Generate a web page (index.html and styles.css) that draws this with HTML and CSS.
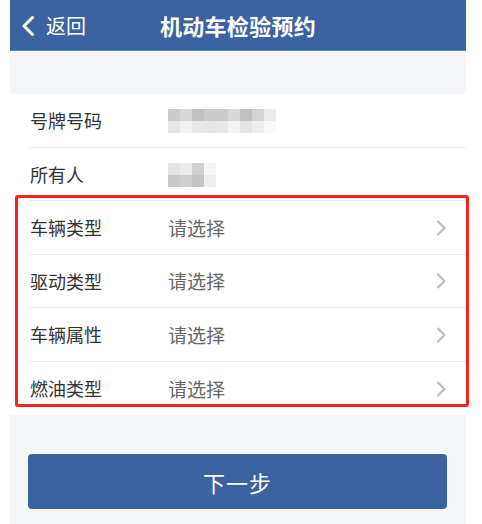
FILE: index.html
```html
<!DOCTYPE html>
<html lang="zh-CN">
<head>
<meta charset="utf-8">
<title>机动车检验预约</title>
<link rel="stylesheet" href="styles.css">
</head>
<body>
<div class="page">
  <header class="topbar">
    <a class="back">
      <svg class="back-icon" width="14" height="20" viewBox="0 0 14 20"><path d="M11.5 1.5 L3 10 L11.5 18.5" fill="none" stroke="#fff" stroke-width="3" stroke-linecap="round" stroke-linejoin="round"/></svg>
      <span>返回</span>
    </a>
    <h1 class="title">机动车检验预约</h1>
  </header>
  <div class="spacer"></div>
  <div class="list">
    <div class="row">
      <span class="label">号牌号码</span>
      <div class="mosaic m9">
        <i style="background:#cccccc"></i><i style="background:#d8d8d8"></i><i style="background:#c0c0c0"></i><i style="background:#cbcbcb"></i><i style="background:#cbcbcb"></i><i style="background:#d9d9d9"></i><i style="background:#c0c0c0"></i><i style="background:#d4d4d4"></i><i style="background:#ececec"></i>
        <i style="background:#e6e6e6"></i><i style="background:#f2f2f2"></i><i style="background:#e8e8e8"></i><i style="background:#e6e6e6"></i><i style="background:#e8e8e8"></i><i style="background:#f4f4f4"></i><i style="background:#e4e4e4"></i><i style="background:#eeeeee"></i><i style="background:#fafafa"></i>
      </div>
    </div>
    <div class="row">
      <span class="label">所有人</span>
      <div class="mosaic m4">
        <i style="background:#e4e4e4"></i><i style="background:#ebebeb"></i><i style="background:#d0d0d0"></i><i style="background:#f6f6f6"></i>
        <i style="background:#cacaca"></i><i style="background:#cfcfcf"></i><i style="background:#c4c4c4"></i><i style="background:#eeeeee"></i>
      </div>
    </div>
    <div class="row">
      <span class="label">车辆类型</span><span class="value">请选择</span>
      <svg class="chev" width="10" height="16" viewBox="0 0 10 16"><path d="M1.5 1 L8.5 8 L1.5 15" fill="none" stroke="#bdbdbd" stroke-width="2.2"/></svg>
    </div>
    <div class="row">
      <span class="label">驱动类型</span><span class="value">请选择</span>
      <svg class="chev" width="10" height="16" viewBox="0 0 10 16"><path d="M1.5 1 L8.5 8 L1.5 15" fill="none" stroke="#bdbdbd" stroke-width="2.2"/></svg>
    </div>
    <div class="row">
      <span class="label">车辆属性</span><span class="value">请选择</span>
      <svg class="chev" width="10" height="16" viewBox="0 0 10 16"><path d="M1.5 1 L8.5 8 L1.5 15" fill="none" stroke="#bdbdbd" stroke-width="2.2"/></svg>
    </div>
    <div class="row last">
      <span class="label">燃油类型</span><span class="value">请选择</span>
      <svg class="chev" width="10" height="16" viewBox="0 0 10 16"><path d="M1.5 1 L8.5 8 L1.5 15" fill="none" stroke="#bdbdbd" stroke-width="2.2"/></svg>
    </div>
  </div>
  <div class="footer">
    <button class="next">下一步</button>
  </div>
</div>
<div class="highlight"></div>
</body>
</html>
```
FILE: styles.css
```css
html, body {
  margin: 0;
  padding: 0;
  background: #fff;
  font-family: "Noto Sans CJK SC", "Noto Sans", sans-serif;
}
.page {
  width: 456px;
  margin-left: 10px;
  height: 524px;
  background: #f5f6f8;
  display: flex;
  flex-direction: column;
}
.topbar {
  height: 50px;
  background: #3c62a0;
  border-bottom: 1px solid #5a80bd;
  display: flex;
  align-items: center;
  position: relative;
  color: #fff;
}
.back {
  display: flex;
  align-items: center;
  gap: 11px;
  padding-left: 11px;
  font-size: 20px;
  z-index: 1;
}
.back-icon { display: block; margin-top: 1px; }
.title {
  position: absolute;
  left: 0;
  right: 0;
  margin: 0;
  text-align: center;
  font-size: 22px;
  font-weight: bold;
  letter-spacing: 0.3px;
}
.spacer { height: 43px; }
.list {
  background: #fff;
  display: flex;
  flex-direction: column;
}
.row {
  height: 52.5px;
  margin-left: 19px;
  border-bottom: 1px solid #ececec;
  display: flex;
  align-items: center;
  position: relative;
}
.row.last { border-bottom: none; height: 53.5px; }
.label {
  width: 138px;
  padding-left: 1px;
  font-size: 18px;
  color: #333;
}
.value {
  font-size: 19px;
  color: #666;
  flex: 1;
}
.chev { margin-right: 20px; margin-top: 1px; }
.mosaic {
  display: grid;
  grid-auto-rows: 12px;
  grid-template-columns: repeat(var(--cols), 12px);
  margin-top: 2px;
}
.mosaic.m9 { --cols: 9; }
.mosaic.m4 { --cols: 4; }
.mosaic i { display: block; }
.footer {
  flex: 1;
  padding: 39px 19px 0 18px;
}
.next {
  width: 100%;
  height: 55px;
  border: none;
  border-radius: 4px;
  background: #3c62a0;
  color: #fff;
  font-family: "Noto Sans CJK SC", sans-serif;
  font-size: 22px;
  letter-spacing: 1px;
}
.highlight {
  position: absolute;
  left: 15px;
  top: 195px;
  width: 448px;
  height: 206px;
  border: 3px solid #f5231b;
  border-radius: 3px;
}
```
